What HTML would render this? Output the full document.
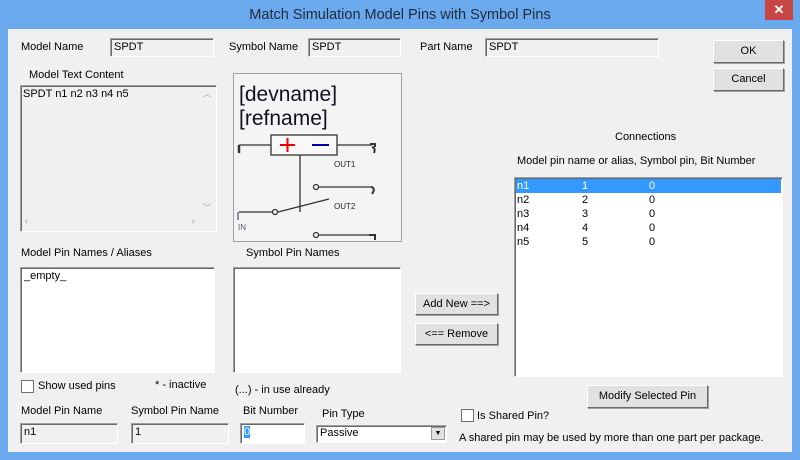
<!DOCTYPE html>
<html><head><style>
*{box-sizing:border-box;margin:0;padding:0}
body{width:800px;height:460px;overflow:hidden;background:#6aa9ee;font-family:"Liberation Sans",sans-serif;font-size:11px;color:#000;position:relative}
.a{position:absolute;white-space:nowrap}
.title{left:0;top:7px;width:800px;text-align:center;font-size:14.5px;color:#1e2b3a}
.close{left:765px;top:0;width:28px;height:20px;background:#c74545;color:#fff;text-align:center;font-size:13px;line-height:20px;font-weight:bold}
.client{left:8px;top:29px;width:784px;height:423px;background:#f0f0f0}
.tb{position:absolute;border:1px solid;border-color:#a0a0a0 #fff #fff #a0a0a0;box-shadow:inset 1px 1px 0 #696969;background:#f0f0f0;padding:2px 3px;font-size:11px}
.w{background:#fff}
.btn{position:absolute;background:#e1e1e1;border:1px solid;border-color:#fff #696969 #696969 #fff;box-shadow:1px 1px 0 #a0a0a0;text-align:center;font-size:11px}
.cb{position:absolute;width:13px;height:13px;border:1px solid #707070;background:#fff}
.r{position:relative;height:14px;line-height:14px}
.r span{position:absolute}
</style></head><body>
<div class="a title">Match Simulation Model Pins with Symbol Pins</div>
<div class="a close">✕</div>
<div class="a client"></div>

<div class="a" style="left:21px;top:41px">Model Name</div>
<div class="tb" style="left:110px;top:38px;width:104px;height:19px">SPDT</div>
<div class="a" style="left:229px;top:41px">Symbol Name</div>
<div class="tb" style="left:308px;top:38px;width:93px;height:19px">SPDT</div>
<div class="a" style="left:420px;top:41px">Part Name</div>
<div class="tb" style="left:485px;top:38px;width:174px;height:19px">SPDT</div>
<div class="btn" style="left:713px;top:40px;width:71px;height:23px;line-height:21px">OK</div>
<div class="btn" style="left:713px;top:68px;width:71px;height:23px;line-height:21px">Cancel</div>

<div class="a" style="left:29px;top:69px">Model Text Content</div>
<div class="tb" style="left:20px;top:85px;width:197px;height:147px;padding:2px 2px">SPDT n1 n2 n3 n4 n5
<div style="position:absolute;right:1px;top:1px;width:16px;height:127px;background:#f0f0f0;color:#aaa;font-size:9px;text-align:center">︿<div style="position:absolute;bottom:0;width:16px">﹀</div></div>
<div style="position:absolute;left:1px;bottom:1px;width:176px;height:16px;color:#aaa;font-size:10px;line-height:16px">&nbsp;‹<span style="position:absolute;right:3px">›</span></div>
</div>

<div class="a" style="left:233px;top:73px;width:169px;height:169px;border:1px solid #a0a0a0;background:#f4f4f4">
<svg width="167" height="167" viewBox="0 0 167 167" style="position:absolute;left:0;top:0">
<text x="5" y="27" font-family="Liberation Sans" font-size="21" fill="#101020">[devname]</text>
<text x="5" y="51" font-family="Liberation Sans" font-size="21" fill="#101020">[refname]</text>
<g stroke="#333" fill="none" stroke-width="1.3">
<line x1="5" y1="71" x2="37" y2="71"/><line x1="5" y1="71" x2="5" y2="79" stroke-width="2.5"/>
<rect x="37" y="61" width="66" height="20" fill="#f8f8f8"/>
<line x1="103" y1="71" x2="138" y2="71"/>
<path d="M136 70 h5 v3 M138 73 q4 1 2 6" stroke-width="2"/>
<line x1="66" y1="81" x2="66" y2="138"/>
<circle cx="82" cy="113" r="2.5"/><line x1="85" y1="113" x2="138" y2="113"/><path d="M137 113 q5 1 1 7" stroke-width="2"/>
<line x1="5" y1="138" x2="38" y2="138"/><circle cx="41" cy="138" r="2.5"/>
<line x1="44" y1="138" x2="95" y2="125"/>
<line x1="4" y1="138" x2="4" y2="146" stroke="#557"/>
<circle cx="82" cy="161" r="2.5"/><line x1="85" y1="161" x2="138" y2="161"/><path d="M135 161 h6 v5" stroke-width="2"/>
</g>
<line x1="46" y1="71" x2="61" y2="71" stroke="#e00" stroke-width="2"/><line x1="53.5" y1="64" x2="53.5" y2="78" stroke="#e00" stroke-width="2"/>
<line x1="78" y1="71" x2="95" y2="71" stroke="#00a" stroke-width="2"/>
<text x="100" y="93" font-family="Liberation Sans" font-size="8" fill="#222">OUT1</text>
<text x="100" y="135" font-family="Liberation Sans" font-size="8" fill="#222">OUT2</text>
<text x="4" y="156" font-family="Liberation Sans" font-size="8" fill="#557">IN</text>
</svg></div>

<div class="a" style="left:615px;top:131px">Connections</div>
<div class="a" style="left:517px;top:155px">Model pin name or alias, Symbol pin, Bit Number</div>
<div class="tb w" style="left:514px;top:177px;width:269px;height:200px;padding:1px 1px">
<div class="r" style="background:#3399ff;color:#fff"><span style="left:1px">n1</span><span style="left:66px">1</span><span style="left:133px">0</span></div>
<div class="r"><span style="left:1px">n2</span><span style="left:66px">2</span><span style="left:133px">0</span></div>
<div class="r"><span style="left:1px">n3</span><span style="left:66px">3</span><span style="left:133px">0</span></div>
<div class="r"><span style="left:1px">n4</span><span style="left:66px">4</span><span style="left:133px">0</span></div>
<div class="r"><span style="left:1px">n5</span><span style="left:66px">5</span><span style="left:133px">0</span></div>
</div>

<div class="a" style="left:21px;top:247px">Model Pin Names / Aliases</div>
<div class="tb w" style="left:20px;top:267px;width:195px;height:106px">_empty_</div>
<div class="a" style="left:246px;top:247px">Symbol Pin Names</div>
<div class="tb w" style="left:233px;top:267px;width:168px;height:106px"></div>
<div class="btn" style="left:415px;top:293px;width:83px;height:22px;line-height:20px">Add New ==&gt;</div>
<div class="btn" style="left:415px;top:323px;width:83px;height:22px;line-height:20px">&lt;== Remove</div>

<div class="cb" style="left:21px;top:380px"></div>
<div class="a" style="left:38px;top:380px">Show used pins</div>
<div class="a" style="left:155px;top:379px">* - inactive</div>
<div class="a" style="left:235px;top:384px">(...) - in use already</div>
<div class="btn" style="left:587px;top:385px;width:121px;height:23px;line-height:21px">Modify Selected Pin</div>

<div class="a" style="left:21px;top:405px">Model Pin Name</div>
<div class="a" style="left:131px;top:405px">Symbol Pin Name</div>
<div class="a" style="left:243px;top:405px">Bit Number</div>
<div class="a" style="left:322px;top:408px">Pin Type</div>
<div class="cb" style="left:461px;top:409px"></div>
<div class="a" style="left:477px;top:410px">Is Shared Pin?</div>
<div class="tb" style="left:20px;top:423px;width:98px;height:21px">n1</div>
<div class="tb" style="left:131px;top:423px;width:98px;height:21px">1</div>
<div class="tb w" style="left:240px;top:423px;width:65px;height:21px"><span style="background:#3399ff;color:#fff">0</span></div>
<div class="tb w" style="left:316px;top:425px;width:131px;height:18px;padding:1px 3px">Passive<div style="position:absolute;right:1px;top:1px;width:14px;height:13px;background:#e1e1e1;border:1px solid #999;font-size:7px;text-align:center;line-height:12px">▼</div></div>
<div class="a" style="left:459px;top:432px">A shared pin may be used by more than one part per package.</div>
</body></html>
